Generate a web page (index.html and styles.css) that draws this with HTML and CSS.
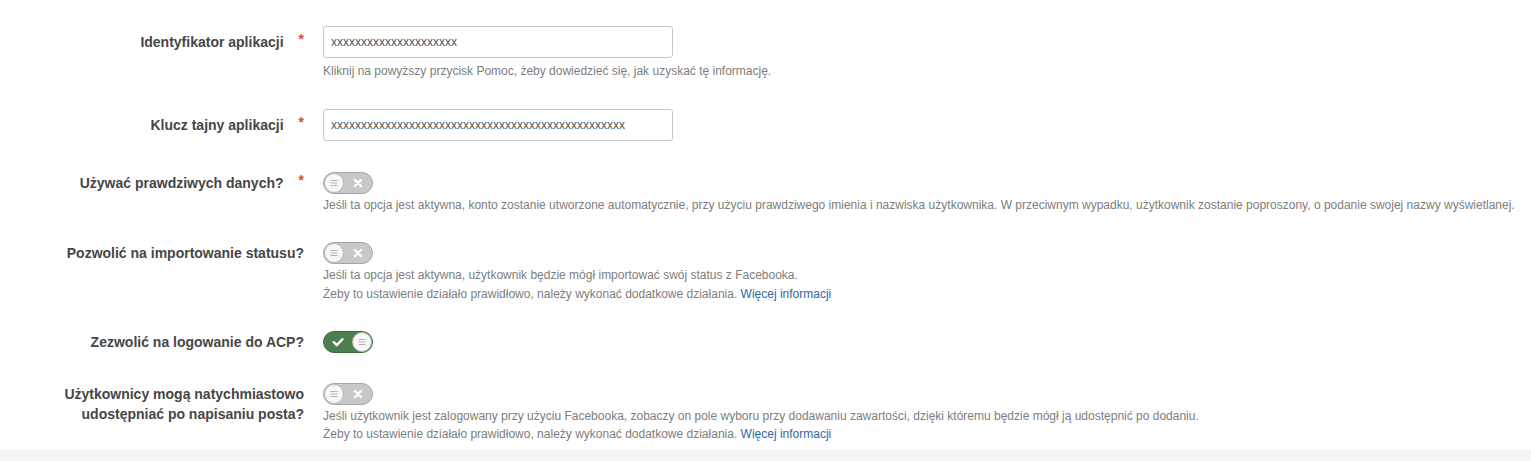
FILE: index.html
```html
<!DOCTYPE html>
<html lang="pl">
<head>
<meta charset="utf-8">
<title>Facebook</title>
<link rel="stylesheet" href="styles.css">
</head>
<body>
<div class="form">
  <div class="row">
    <div class="label label-input"><span>Identyfikator aplikacji</span><span class="req">*</span></div>
    <div class="control">
      <input class="text" type="text" value="xxxxxxxxxxxxxxxxxxxxx">
      <div class="help help-input">Kliknij na powyższy przycisk Pomoc, żeby dowiedzieć się, jak uzyskać tę informację.</div>
    </div>
  </div>
  <div class="row">
    <div class="label label-input"><span>Klucz tajny aplikacji</span><span class="req">*</span></div>
    <div class="control">
      <input class="text" type="text" value="xxxxxxxxxxxxxxxxxxxxxxxxxxxxxxxxxxxxxxxxxxxxxxxxx">
    </div>
  </div>
  <div class="row row-help">
    <div class="label label-toggle"><span>Używać prawdziwych danych?</span><span class="req">*</span></div>
    <div class="control">
      <div class="toggle off">
        <span class="knob"><svg width="12" height="12" viewBox="0 0 12 12"><path d="M2.5 3.5h7M2.5 6h7M2.5 8.5h7" stroke="#b5b5b5" stroke-width="1"/></svg></span>
        <span class="mark"><svg width="10" height="10" viewBox="0 0 10 10"><path d="M2 2l6 6M8 2l-6 6" stroke="#fff" stroke-width="2.4" stroke-linecap="round"/></svg></span>
      </div>
      <div class="help help-toggle">Jeśli ta opcja jest aktywna, konto zostanie utworzone automatycznie, przy użyciu prawdziwego imienia i nazwiska użytkownika. W przeciwnym wypadku, użytkownik zostanie poproszony, o podanie swojej nazwy wyświetlanej.</div>
    </div>
  </div>
  <div class="row row-help">
    <div class="label label-toggle"><span>Pozwolić na importowanie statusu?</span></div>
    <div class="control">
      <div class="toggle off">
        <span class="knob"><svg width="12" height="12" viewBox="0 0 12 12"><path d="M2.5 3.5h7M2.5 6h7M2.5 8.5h7" stroke="#b5b5b5" stroke-width="1"/></svg></span>
        <span class="mark"><svg width="10" height="10" viewBox="0 0 10 10"><path d="M2 2l6 6M8 2l-6 6" stroke="#fff" stroke-width="2.4" stroke-linecap="round"/></svg></span>
      </div>
      <div class="help help-toggle">Jeśli ta opcja jest aktywna, użytkownik będzie mógł importować swój status z Facebooka.<br>Żeby to ustawienie działało prawidłowo, należy wykonać dodatkowe działania. <a href="#">Więcej informacji</a></div>
    </div>
  </div>
  <div class="row">
    <div class="label label-toggle"><span>Zezwolić na logowanie do ACP?</span></div>
    <div class="control">
      <div class="toggle on">
        <span class="mark"><svg width="12" height="10" viewBox="0 0 12 10"><path d="M1.8 5.2l3 3 5.6-6" fill="none" stroke="#fff" stroke-width="2.4" stroke-linecap="round" stroke-linejoin="round"/></svg></span>
        <span class="knob"><svg width="12" height="12" viewBox="0 0 12 12"><path d="M2.5 3.5h7M2.5 6h7M2.5 8.5h7" stroke="#b5b5b5" stroke-width="1"/></svg></span>
      </div>
    </div>
  </div>
  <div class="row">
    <div class="label label-toggle"><span>Użytkownicy mogą natychmiastowo udostępniać po napisaniu posta?</span></div>
    <div class="control">
      <div class="toggle off">
        <span class="knob"><svg width="12" height="12" viewBox="0 0 12 12"><path d="M2.5 3.5h7M2.5 6h7M2.5 8.5h7" stroke="#b5b5b5" stroke-width="1"/></svg></span>
        <span class="mark"><svg width="10" height="10" viewBox="0 0 10 10"><path d="M2 2l6 6M8 2l-6 6" stroke="#fff" stroke-width="2.4" stroke-linecap="round"/></svg></span>
      </div>
      <div class="help help-toggle">Jeśli użytkownik jest zalogowany przy użyciu Facebooka, zobaczy on pole wyboru przy dodawaniu zawartości, dzięki któremu będzie mógł ją udostępnić po dodaniu.<br>Żeby to ustawienie działało prawidłowo, należy wykonać dodatkowe działania. <a href="#">Więcej informacji</a></div>
    </div>
  </div>
</div>
</body>
</html>
```

FILE: styles.css
```css
html, body {
  margin: 0;
  padding: 0;
}
body {
  background: #f4f4f4;
  font-family: "Liberation Sans", Arial, sans-serif;
  color: #555;
}
.form {
  background: #fff;
  padding: 26px 0 6px 0;
}
.row {
  display: flex;
  align-items: flex-start;
  margin-bottom: 29px;
}
.row.row-help {
  margin-bottom: 27.5px;
}
.row:last-child {
  margin-bottom: 0;
}
.label {
  box-sizing: border-box;
  width: 258px;
  margin-left: 46px;
  flex: none;
  text-align: right;
  font-weight: bold;
  font-size: 14px;
  line-height: 20px;
  color: #464646;
}
.label-input {
  padding-top: 6px;
  min-height: 34px;
}
.label-toggle {
  padding-top: 1px;
}
.req {
  color: #d9473f;
  margin-left: 15px;
  position: relative;
  top: -3px;
}
.control {
  margin-left: 19px;
  flex: 1;
  min-width: 0;
}
.text {
  display: block;
  box-sizing: border-box;
  width: 350px;
  height: 32px;
  margin: 0;
  padding: 0 7px;
  border: 1px solid #c8c8c8;
  border-radius: 3px;
  background: #fff;
  font-family: "Liberation Sans", Arial, sans-serif;
  font-size: 12px;
  color: #555;
  outline: none;
}
.help {
  font-size: 12px;
  line-height: 18.5px;
  color: #7d7d7d;
  white-space: nowrap;
}
.help-input {
  margin-top: 3.5px;
}
.help-toggle {
  margin-top: 2px;
}
.help a {
  color: #2f66a5;
  text-decoration: none;
}
.toggle {
  box-sizing: border-box;
  width: 50px;
  height: 22px;
  margin-bottom: 1px;
  border-radius: 11px;
  border: 1px solid #a6a6a6;
  display: flex;
  align-items: center;
  padding: 0;
}
.toggle.off {
  background: #c8c8c8;
}
.toggle.on {
  background: #4e7d4f;
  border-color: #3f6a40;
}
.knob {
  box-sizing: border-box;
  width: 20px;
  height: 20px;
  border-radius: 50%;
  background: #f7f7f7;
  border: 1px solid #b8b8b8;
  display: flex;
  align-items: center;
  justify-content: center;
  flex: none;
}
.mark {
  flex: 1;
  display: flex;
  align-items: center;
  justify-content: center;
  height: 20px;
}
```
